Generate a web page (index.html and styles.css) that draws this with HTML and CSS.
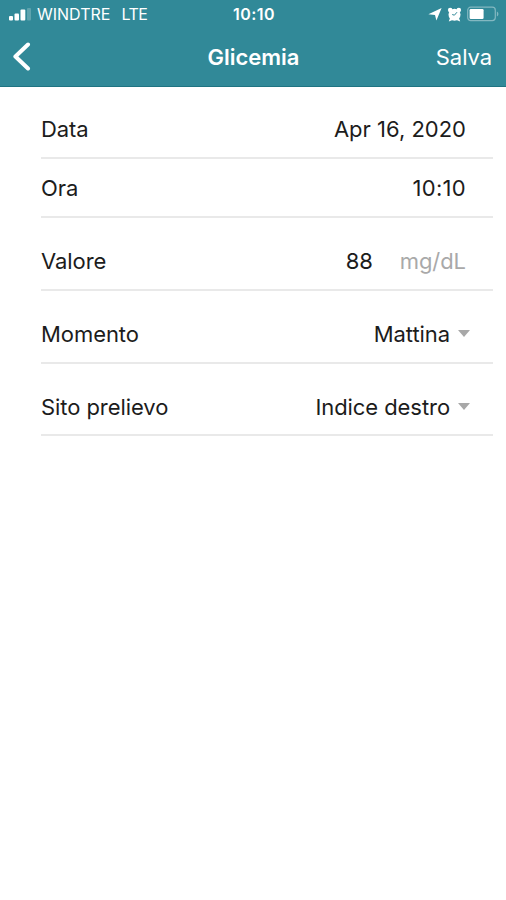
FILE: index.html
```html
<!doctype html>
<html lang="it">
<head>
<meta charset="utf-8">
<meta name="viewport" content="width=device-width, initial-scale=1.0"/>
<title>Glicemia</title>
<link rel="stylesheet" href="styles.css">
</head>
<body>
<header>
	<div class="status">
		<div class="carrier">
			<svg class="signal" width="22" height="14" viewBox="0 0 22 14" fill="#fff">
				<rect x="0" y="9" width="4" height="4.5" rx="1"/>
				<rect x="5.5" y="6.5" width="4.5" height="7" rx="1"/>
				<rect x="11.5" y="2.5" width="4.8" height="11" rx="1"/>
				<rect x="18" y="1" width="4" height="12.5" rx="1" opacity=".22"/>
			</svg>
			<span class="operator">WINDTRE</span>
			<span class="network">LTE</span>
		</div>
		<span class="clock">10:10</span>
		<div class="tray">
			<svg class="location" width="14" height="14" viewBox="0 0 14 14" fill="#fff">
				<path d="M13.6 1 8.4 13.4 7 8 .4 7.2z"/>
			</svg>
			<svg class="alarm" width="15" height="15" viewBox="0 0 15 15" fill="#fff">
				<circle cx="7.5" cy="7.8" r="6"/>
				<circle cx="3.2" cy="3" r="2.3"/>
				<circle cx="11.8" cy="3" r="2.3"/>
				<path d="M1.8 14.4 3.2 10.6l2.4 2.4zM13.2 14.4 11.8 10.6l-2.4 2.4z"/>
				<path d="M10 5.2 7.4 8.2 5.2 7.5" fill="none" stroke="#318998" stroke-width="1"/>
			</svg>
			<svg class="battery" width="32" height="16" viewBox="0 0 32 16">
				<rect x=".7" y="1.2" width="27.6" height="13.4" rx="3" fill="none" stroke="#fff" stroke-opacity=".4" stroke-width="1.2"/>
				<rect x="2.6" y="3" width="14" height="10" rx="1.2" fill="#fff"/>
				<path d="M29.9 5.4c2 .8 2 4.2 0 5z" fill="#fff" fill-opacity=".4"/>
			</svg>
		</div>
	</div>
	<nav>
		<a class="btn-back" href="javascript:" aria-label="Indietro">
			<svg width="20" height="30" viewBox="0 0 20 30" fill="none" stroke="#fff" stroke-width="4" stroke-linecap="round" stroke-linejoin="round">
				<path d="M16 2.5 3.4 14.5 16 26.5"/>
			</svg>
		</a>
		<h1>Glicemia</h1>
		<a class="btn-save" href="javascript:">Salva</a>
	</nav>
</header>
<ul class="form">
	<li>
		<span class="label">Data</span>
		<span class="value date">Apr 16, 2020</span>
	</li>
	<li>
		<span class="label">Ora</span>
		<span class="value time">10:10</span>
	</li>
	<li class="tall">
		<span class="label">Valore</span>
		<span class="value number">88</span>
		<span class="unit">mg/dL</span>
	</li>
	<li class="tall select">
		<span class="label">Momento</span>
		<span class="value">Mattina</span>
		<i class="arrow"></i>
	</li>
	<li class="tall select">
		<span class="label">Sito prelievo</span>
		<span class="value">Indice destro</span>
		<i class="arrow"></i>
	</li>
</ul>
</body>
</html>
```

FILE: styles.css
```css
html,body,ul,li,h1{margin:0;padding:0}
ul{list-style:none}
*{box-sizing:border-box}
svg{display:block}
a{color:inherit;text-decoration:none}
body{min-height:100vh;background:#fff;color:#1c1c1c;font:400 22px/30px Inter,"Liberation Sans",sans-serif;letter-spacing:-.07px}
header{height:87px;background:#318998;border-bottom:1px solid #1f7482;color:#fff}

/* status bar */
.status{display:grid;grid-template-columns:1fr auto 1fr;align-items:center;height:28px;padding:0 7px 0 9px;font-size:16px;line-height:28px}
.carrier{display:flex;align-items:center;letter-spacing:0}
.operator{margin-left:6px}
.network{margin-left:11px;letter-spacing:-.5px}
.clock{font-weight:600;letter-spacing:.5px}
.tray{display:flex;align-items:center;justify-content:flex-end}
.alarm{margin-left:5px}
.battery{margin-left:5px}

/* title bar */
nav{display:grid;grid-template-columns:1fr auto 1fr;align-items:center;height:58px;padding:0 14px 0 12px}
h1{margin-left:3px;font-size:22px;font-weight:600;line-height:30px;letter-spacing:0}
.btn-save{justify-self:end}

.form{padding:13px 13px 0 41px}
.form li{display:flex;align-items:center;height:59px;padding-right:27px;border-bottom:2px solid #e9e9e9}
.form .tall{height:73px;padding-top:14px}
.form .tall:last-child{height:72px;padding-top:15px}
.form .select{padding-right:23px}
.label{flex:1}
.date{letter-spacing:0}
.time{letter-spacing:.3px}
.unit{margin-left:27px;color:#a9a9a9}
.arrow{margin-left:8px;border:6px solid transparent;border-top:7px solid #a8a8a8;border-bottom:0}
```
